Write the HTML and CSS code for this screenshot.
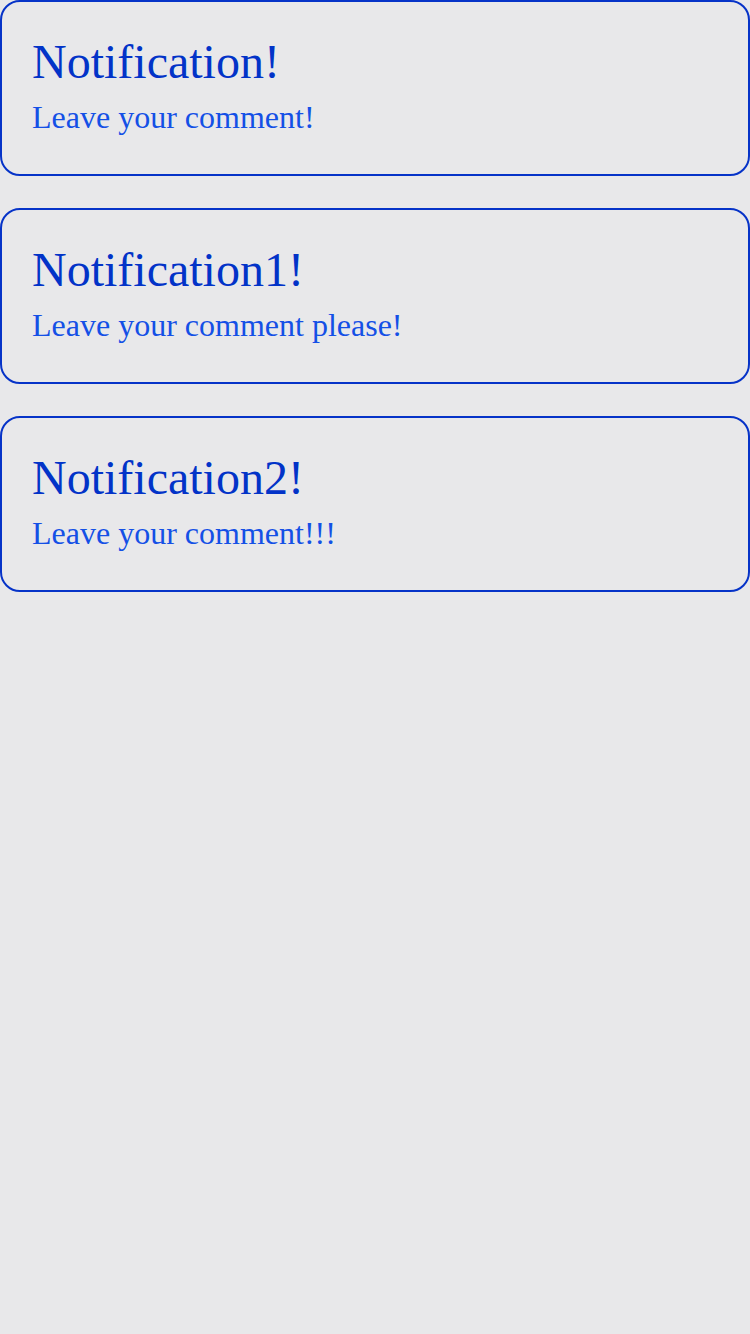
FILE: index.html
```html
<!DOCTYPE html>
<html>
<head>
<meta charset="utf-8">
<link rel="stylesheet" href="styles.css">
</head>
<body>
<div class="list">
  <div class="card">
    <div class="title">Notification!</div>
    <div class="text">Leave your comment!</div>
  </div>
  <div class="card">
    <div class="title">Notification1!</div>
    <div class="text">Leave your comment please!</div>
  </div>
  <div class="card">
    <div class="title">Notification2!</div>
    <div class="text">Leave your comment!!!</div>
  </div>
</div>
</body>
</html>
```

FILE: styles.css
```css
html, body {
  margin: 0;
  padding: 0;
  background: #e8e8ea;
  height: 100%;
}
body {
  font-family: "Liberation Serif", "Times New Roman", serif;
}
.list {
  display: flex;
  flex-direction: column;
  gap: 32px;
}
.card {
  border: 2px solid #0633c8;
  border-radius: 20px;
  padding: 30px 30px 36px;
}
.title {
  font-size: 48px;
  line-height: 60px;
  margin-bottom: 4px;
  color: #0233c8;
}
.text {
  font-size: 32px;
  line-height: 42px;
  color: #1450e6;
}
```
